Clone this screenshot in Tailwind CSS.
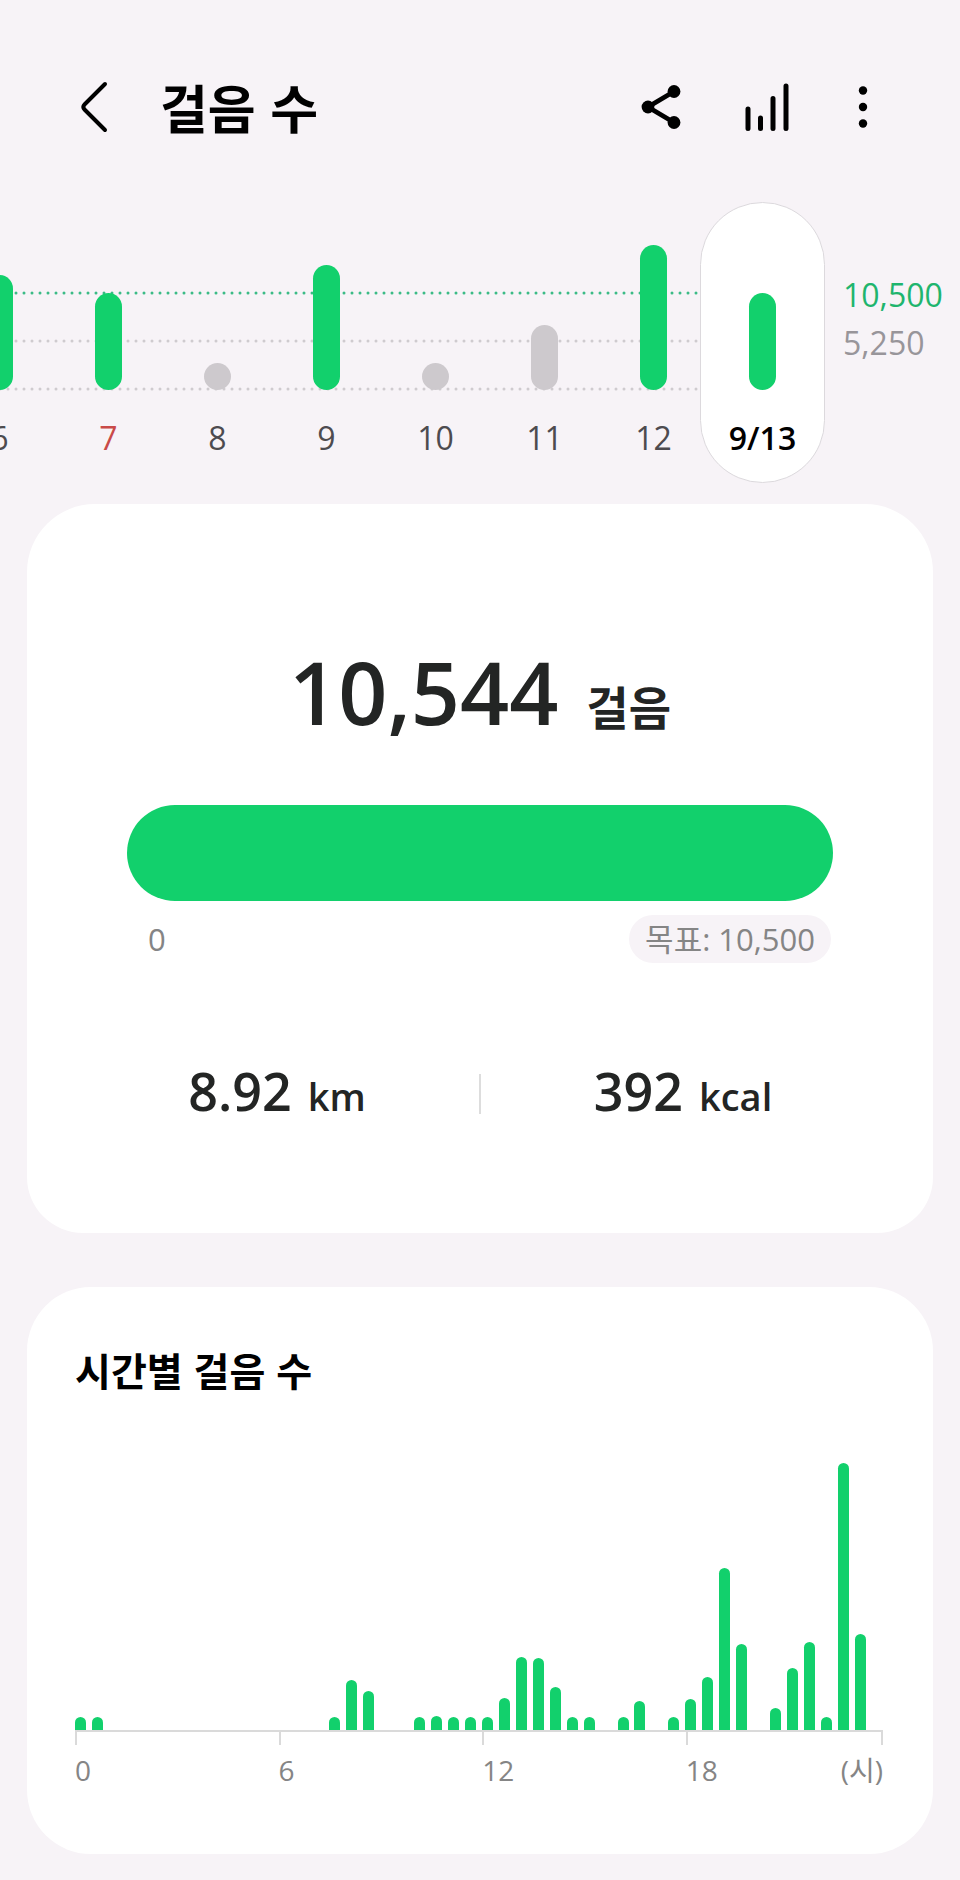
<!DOCTYPE html>
<html lang="ko">
<head>
  <meta charset="UTF-8" />
  <meta name="viewport" content="width=device-width, initial-scale=1.0"/>
  <title>걸음 수</title>
  <script src="https://cdn.jsdelivr.net/npm/@tailwindcss/browser@4"></script>
</head>
<body class="bg-[#f7f3f7] min-h-screen pb-6 overflow-x-hidden font-['Open_Sans','Noto_Sans_CJK_KR',sans-serif] text-black">

  <header class="flex items-center pt-[72px] pl-[72px] pr-[85px]">
    <button type="button" aria-label="뒤로" class="w-11 h-[70px] flex items-center justify-center">
      <svg class="w-[30px] h-[54px]" viewBox="0 0 30 54" fill="none" stroke="currentColor" stroke-width="4" stroke-linecap="round" stroke-linejoin="round">
        <path d="M26 4 L5.500 24.500 Q3 27 5.500 29.500 L26 50"/>
      </svg>
    </button>
    <h1 class="ml-11 flex-1 font-['Noto_Sans_CJK_KR',sans-serif] text-[52px] leading-[70px] font-bold">걸음 수</h1>
    <div class="flex items-center gap-[56px]">
      <button type="button" aria-label="공유" class="w-11 h-[70px] flex items-center justify-center">
        <svg class="w-10 h-11" viewBox="0 0 40 44" fill="currentColor" stroke="currentColor">
          <path d="M33 6.500 L7 22 L33 37.500" fill="none" stroke-width="4.800"/>
          <circle cx="33" cy="6.500" r="6.400" stroke="none"/>
          <circle cx="7" cy="22" r="6.400" stroke="none"/>
          <circle cx="33" cy="37.500" r="6.400" stroke="none"/>
        </svg>
      </button>
      <button type="button" aria-label="통계" class="w-[56px] h-[70px] flex items-center justify-center">
        <svg class="w-11 h-[50px]" viewBox="0 0 44 50" fill="none" stroke="currentColor" stroke-width="5" stroke-linecap="round">
          <path d="M3 27V46.500M15.500 36V46.500M28 16.500V46.500M41 4V46.500"/>
        </svg>
      </button>
      <button type="button" aria-label="더보기" class="w-6 h-[70px] flex items-center justify-center">
        <svg class="w-3 h-[44px]" viewBox="0 0 12 44" fill="currentColor">
          <circle cx="6" cy="5.500" r="4.200"/>
          <circle cx="6" cy="22" r="4.200"/>
          <circle cx="6" cy="38.500" r="4.200"/>
        </svg>
      </button>
    </div>
  </header>

  <!-- daily bars -->
  <section class="mt-[60px] flex h-[281px]" aria-label="일별 걸음 수">
    <div class="relative flex-1 min-w-0 flex justify-end">
      <svg class="absolute inset-0 w-full h-full" fill="none" stroke-width="3" stroke-linecap="round" stroke-dasharray="0 8">
        <line x1="0" y1="91" x2="100%" y2="91" stroke="#3bbb86"/>
        <line x1="0" y1="139" x2="100%" y2="139" stroke="#cfcbcf"/>
        <line x1="0" y1="187" x2="100%" y2="187" stroke="#cfcbcf"/>
      </svg>
      <div id="days" class="relative flex justify-end"></div>
    </div>
    <div class="w-[143px] pl-[26px] pt-[69px] text-[32px] leading-[48px]">
      <p class="text-[#1fb56e]">10,500</p>
      <p class="text-[#98959a]">5,250</p>
    </div>
  </section>

  <main class="mt-[21px] px-[27px] flex flex-col gap-[54px]">

    <section class="bg-white rounded-t-[68px] rounded-b-[56px] pt-[140px] pb-[105px] text-[#232524]">
      <p class="flex items-baseline justify-center gap-7 leading-[96px] font-semibold">
        <span class="text-[86px]">10,544</span>
        <span class="text-[46px]">걸음</span>
      </p>

      <div class="mt-[50px] mx-[100px]">
        <div class="h-24 rounded-full bg-[#12d06c]" role="progressbar" aria-label="목표 달성" aria-valuemin="0" aria-valuemax="10500" aria-valuenow="10500"></div>
        <div class="mt-[14px] pl-[21px] pr-[2px] flex justify-between items-center text-[31px] leading-[48px] text-[#858585]">
          <span>0</span>
          <span class="px-4 rounded-full bg-[#f7f3f7]">목표: 10,500</span>
        </div>
      </div>

      <div class="mt-[96px] px-12 flex items-center">
        <p class="flex-1 flex items-baseline justify-center gap-4 leading-[64px] font-semibold">
          <span class="text-[52px]">8.92</span><span class="text-[38px]">km</span>
        </p>
        <div class="w-[2px] h-10 bg-[#dddddd]"></div>
        <p class="flex-1 flex items-baseline justify-center gap-4 leading-[64px] font-semibold">
          <span class="text-[52px]">392</span><span class="text-[38px]">kcal</span>
        </p>
      </div>
    </section>

    <section class="bg-white rounded-[64px] pt-[52px] pb-[64px] pl-12 pr-[50px]">
      <h2 class="font-['Noto_Sans_CJK_KR',sans-serif] text-[39px] leading-[60px] font-bold">시간별 걸음 수</h2>
      <div id="hours" class="mt-16 h-[267px] flex items-end justify-between"></div>
      <div class="flex h-[15px] border-t-2 border-[#dadada]">
        <div class="w-[25.2%] border-l-2 border-[#dadada]"></div>
        <div class="w-[25.2%] border-l-2 border-[#dadada]"></div>
        <div class="w-[25.2%] border-l-2 border-[#dadada]"></div>
        <div class="flex-1 border-x-2 border-[#dadada]"></div>
      </div>
      <div class="mt-[5px] flex text-[28px] leading-[40px] text-[#858585]">
        <span class="w-[25.2%]">0</span>
        <span class="w-[25.2%]">6</span>
        <span class="w-[25.2%]">12</span>
        <span class="flex-1">18</span>
        <span>(시)</span>
      </div>
    </section>

  </main>

  <script>
    // h: bar height in px, the goal line is at 97
    const days = [
      { label: "6", h: 115 },
      { label: "7", h: 97, holiday: true },
      { label: "8", h: 27 },
      { label: "9", h: 125 },
      { label: "10", h: 27 },
      { label: "11", h: 65 },
      { label: "12", h: 145 },
      { label: "9/13", h: 97, selected: true }
    ];

    const daysBox = document.getElementById("days");

    days.forEach(d => {
      const btn = document.createElement("button");
      btn.type = "button";
      btn.className = "relative w-[109px] shrink-0 h-[281px] flex flex-col items-center";
      const bar = d.h >= 97 ? "bg-[#12d06c]" : "bg-[#cdc9cd]";
      let text = "text-[#4d4b4f]";
      if (d.holiday) text = "text-[#c94a48]";
      if (d.selected) text = "text-black font-semibold";
      btn.innerHTML = `
        ${d.selected ? '<span class="absolute inset-y-0 -inset-x-2 rounded-full bg-white border border-[#dcd9dd]"></span>' : ''}
        <span class="relative h-[188px] flex items-end"><span class="w-[27px] rounded-full ${bar}" style="height:${d.h}px"></span></span>
        <span class="relative mt-6 text-[32px] leading-[48px] ${text}">${d.label}</span>
      `;
      daysBox.appendChild(btn);
    });

    // one value per half hour
    const hours = [
      13, 13, 0, 0, 0, 0, 0, 0, 0, 0, 0, 0,
      0, 0, 0, 13, 50, 39, 0, 0, 13, 14, 13, 13,
      13, 32, 73, 72, 43, 13, 13, 0, 13, 29, 0, 13,
      31, 53, 162, 86, 0, 22, 62, 88, 13, 267, 96, 0
    ];

    document.getElementById("hours").innerHTML = hours
      .map(h => `<div class="w-[11px] rounded-t-full bg-[#12d06c]" style="height:${h}px"></div>`)
      .join("");
  </script>

</body>
</html>
